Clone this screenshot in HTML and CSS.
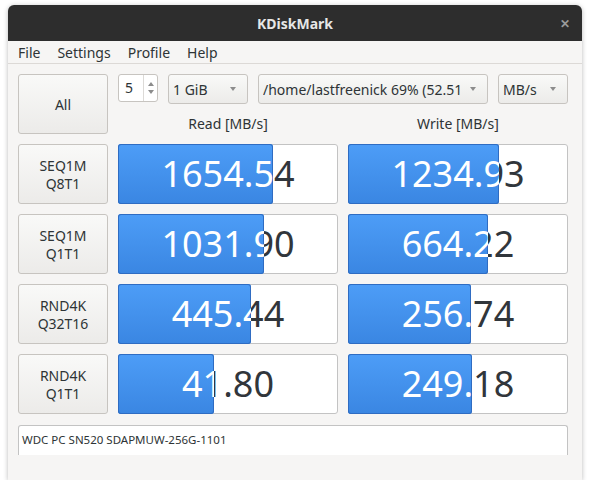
FILE: index.html
```html
<!DOCTYPE html>
<html>
<head>
<meta charset="utf-8">
<link rel="stylesheet" href="styles.css">
</head>
<body>
<div class="window">
  <div class="titlebar">
    <span class="title">KDiskMark</span>
    <span class="close">&#x2715;</span>
  </div>
  <div class="menubar">
    <span class="menu-item">File</span>
    <span class="menu-item">Settings</span>
    <span class="menu-item">Profile</span>
    <span class="menu-item">Help</span>
  </div>
  <div class="content">
    <div class="grid">
      <div class="btn all">All</div>
      <div class="controls">
        <div class="spin">
          <span class="spin-value">5</span>
          <span class="spin-arrows"><span class="up"></span><span class="down"></span></span>
        </div>
        <div class="combo size"><span class="combo-text">1 GiB</span><span class="arrow"></span></div>
        <div class="combo path"><span class="combo-text">/home/lastfreenick 69% (52.51</span><span class="arrow"></span></div>
        <div class="combo unit"><span class="combo-text">MB/s</span><span class="arrow"></span></div>
      </div>
      <div class="head">Read [MB/s]</div>
      <div class="head">Write [MB/s]</div>

      <div class="btn test">SEQ1M<br>Q8T1</div>
      <div class="meter"><span class="val">1654.54</span><div class="fill" style="width:155px"><span class="fill-val">1654.54</span></div></div>
      <div class="meter"><span class="val">1234.93</span><div class="fill" style="width:151px"><span class="fill-val">1234.93</span></div></div>

      <div class="btn test">SEQ1M<br>Q1T1</div>
      <div class="meter"><span class="val">1031.90</span><div class="fill" style="width:146px"><span class="fill-val">1031.90</span></div></div>
      <div class="meter"><span class="val">664.22</span><div class="fill" style="width:140px"><span class="fill-val">664.22</span></div></div>

      <div class="btn test">RND4K<br>Q32T16</div>
      <div class="meter"><span class="val">445.44</span><div class="fill" style="width:133px"><span class="fill-val">445.44</span></div></div>
      <div class="meter"><span class="val">256.74</span><div class="fill" style="width:123px"><span class="fill-val">256.74</span></div></div>

      <div class="btn test">RND4K<br>Q1T1</div>
      <div class="meter"><span class="val">41.80</span><div class="fill" style="width:96px"><span class="fill-val">41.80</span></div></div>
      <div class="meter"><span class="val">249.18</span><div class="fill" style="width:124px"><span class="fill-val">249.18</span></div></div>
    </div>
    <div class="device">WDC PC SN520 SDAPMUW-256G-1101</div>
  </div>
</div>
</body>
</html>
```

FILE: styles.css
```css
html, body {
  margin: 0;
  padding: 0;
  background: #ffffff;
}
body {
  font-family: "Noto Sans", "Open Sans", sans-serif;
  color: #2e3436;
  padding: 5px 0 0 8px;
}
.window {
  width: 574px;
  height: 475px;
  background: #f6f5f4;
  border-radius: 6px 6px 0 0;
  box-shadow: 0 1px 5px rgba(0, 0, 0, 0.28);
  overflow: hidden;
  display: flex;
  flex-direction: column;
}
.titlebar {
  height: 36px;
  background: #2d2d2d;
  display: flex;
  align-items: center;
  justify-content: center;
  position: relative;
}
.title {
  color: #e6e6e6;
  font-weight: bold;
  font-size: 14px;
}
.close {
  position: absolute;
  right: 12px;
  top: 10px;
  color: #9a9a9a;
  font-size: 12px;
  font-weight: bold;
}
.menubar {
  height: 22px;
  border-bottom: 1px solid #dcd9d6;
  display: flex;
  align-items: center;
  padding-left: 10px;
  font-size: 14px;
  color: #2e3436;
}
.menu-item {
  margin-right: 17px;
}
.content {
  padding: 10px 0 0 10px;
}
.grid {
  display: grid;
  grid-template-columns: 90px 220px 220px;
  grid-template-rows: 30px 20px repeat(4, 60px);
  gap: 10px;
}
.btn {
  box-sizing: border-box;
  border: 1px solid #c7c4c0;
  border-radius: 3px;
  background: linear-gradient(#f9f9f8, #ecebe9);
  display: flex;
  align-items: center;
  justify-content: center;
  text-align: center;
  font-size: 14px;
  line-height: 18px;
  padding-top: 2px;
  color: #2e3436;
}
.all {
  grid-row: 1 / span 2;
}
.controls {
  grid-column: 2 / span 2;
  display: flex;
  gap: 10px;
  align-items: flex-start;
}
.spin {
  box-sizing: border-box;
  width: 40px;
  height: 28px;
  background: #fff;
  border: 1px solid #c7c4c0;
  border-radius: 3px;
  display: flex;
  font-size: 14px;
}
.spin-value {
  flex: 1;
  padding-left: 6px;
  line-height: 26px;
}
.spin-arrows {
  width: 13px;
  border-left: 1px solid #dcdad7;
  display: flex;
  flex-direction: column;
  align-items: center;
  justify-content: center;
  gap: 4px;
}
.up {
  width: 0; height: 0;
  border-left: 3.5px solid transparent;
  border-right: 3.5px solid transparent;
  border-bottom: 4px solid #8c8c8c;
}
.down {
  width: 0; height: 0;
  border-left: 3.5px solid transparent;
  border-right: 3.5px solid transparent;
  border-top: 4px solid #8c8c8c;
}
.combo {
  box-sizing: border-box;
  height: 30px;
  border: 1px solid #c7c4c0;
  border-radius: 3px;
  background: linear-gradient(#f9f9f8, #ecebe9);
  display: flex;
  align-items: center;
  padding: 0 11px 0 4px;
  font-size: 14px;
  color: #2e3436;
}
.combo-text {
  flex: 1;
  white-space: nowrap;
  overflow: hidden;
}
.arrow {
  width: 0; height: 0;
  border-left: 3.5px solid transparent;
  border-right: 3.5px solid transparent;
  border-top: 4px solid #8c8c8c;
  margin-left: 8px;
}
.size { width: 80px; }
.path { width: 230px; }
.unit { width: 70px; }
.head {
  font-size: 14px;
  text-align: center;
  line-height: 20px;
  color: #2e3436;
}
.meter {
  box-sizing: border-box;
  position: relative;
  background: #fff;
  border: 1px solid #c3c3c3;
  border-radius: 3px;
  display: flex;
  align-items: center;
  justify-content: center;
  font-size: 36px;
  color: #31363b;
}
.val {
  line-height: 58px;
}
.fill {
  position: absolute;
  left: -1px;
  top: -1px;
  bottom: -1px;
  overflow: hidden;
  border-radius: 3px;
  background: linear-gradient(#4d9df7, #3a86e2);
  box-shadow: inset 0 0 0 1px #2f6cc2;
}
.fill-val {
  position: absolute;
  left: 0;
  top: 0;
  width: 220px;
  height: 60px;
  display: flex;
  align-items: center;
  justify-content: center;
  color: #ffffff;
  line-height: 58px;
}
.device {
  box-sizing: border-box;
  margin-top: 11px;
  width: 550px;
  height: 30px;
  background: #fff;
  border: 1px solid #c3c3c3;
  border-bottom: none;
  border-radius: 3px 3px 0 0;
  font-size: 11.5px;
  padding: 6px 0 0 3px;
  color: #2e3436;
}
```
